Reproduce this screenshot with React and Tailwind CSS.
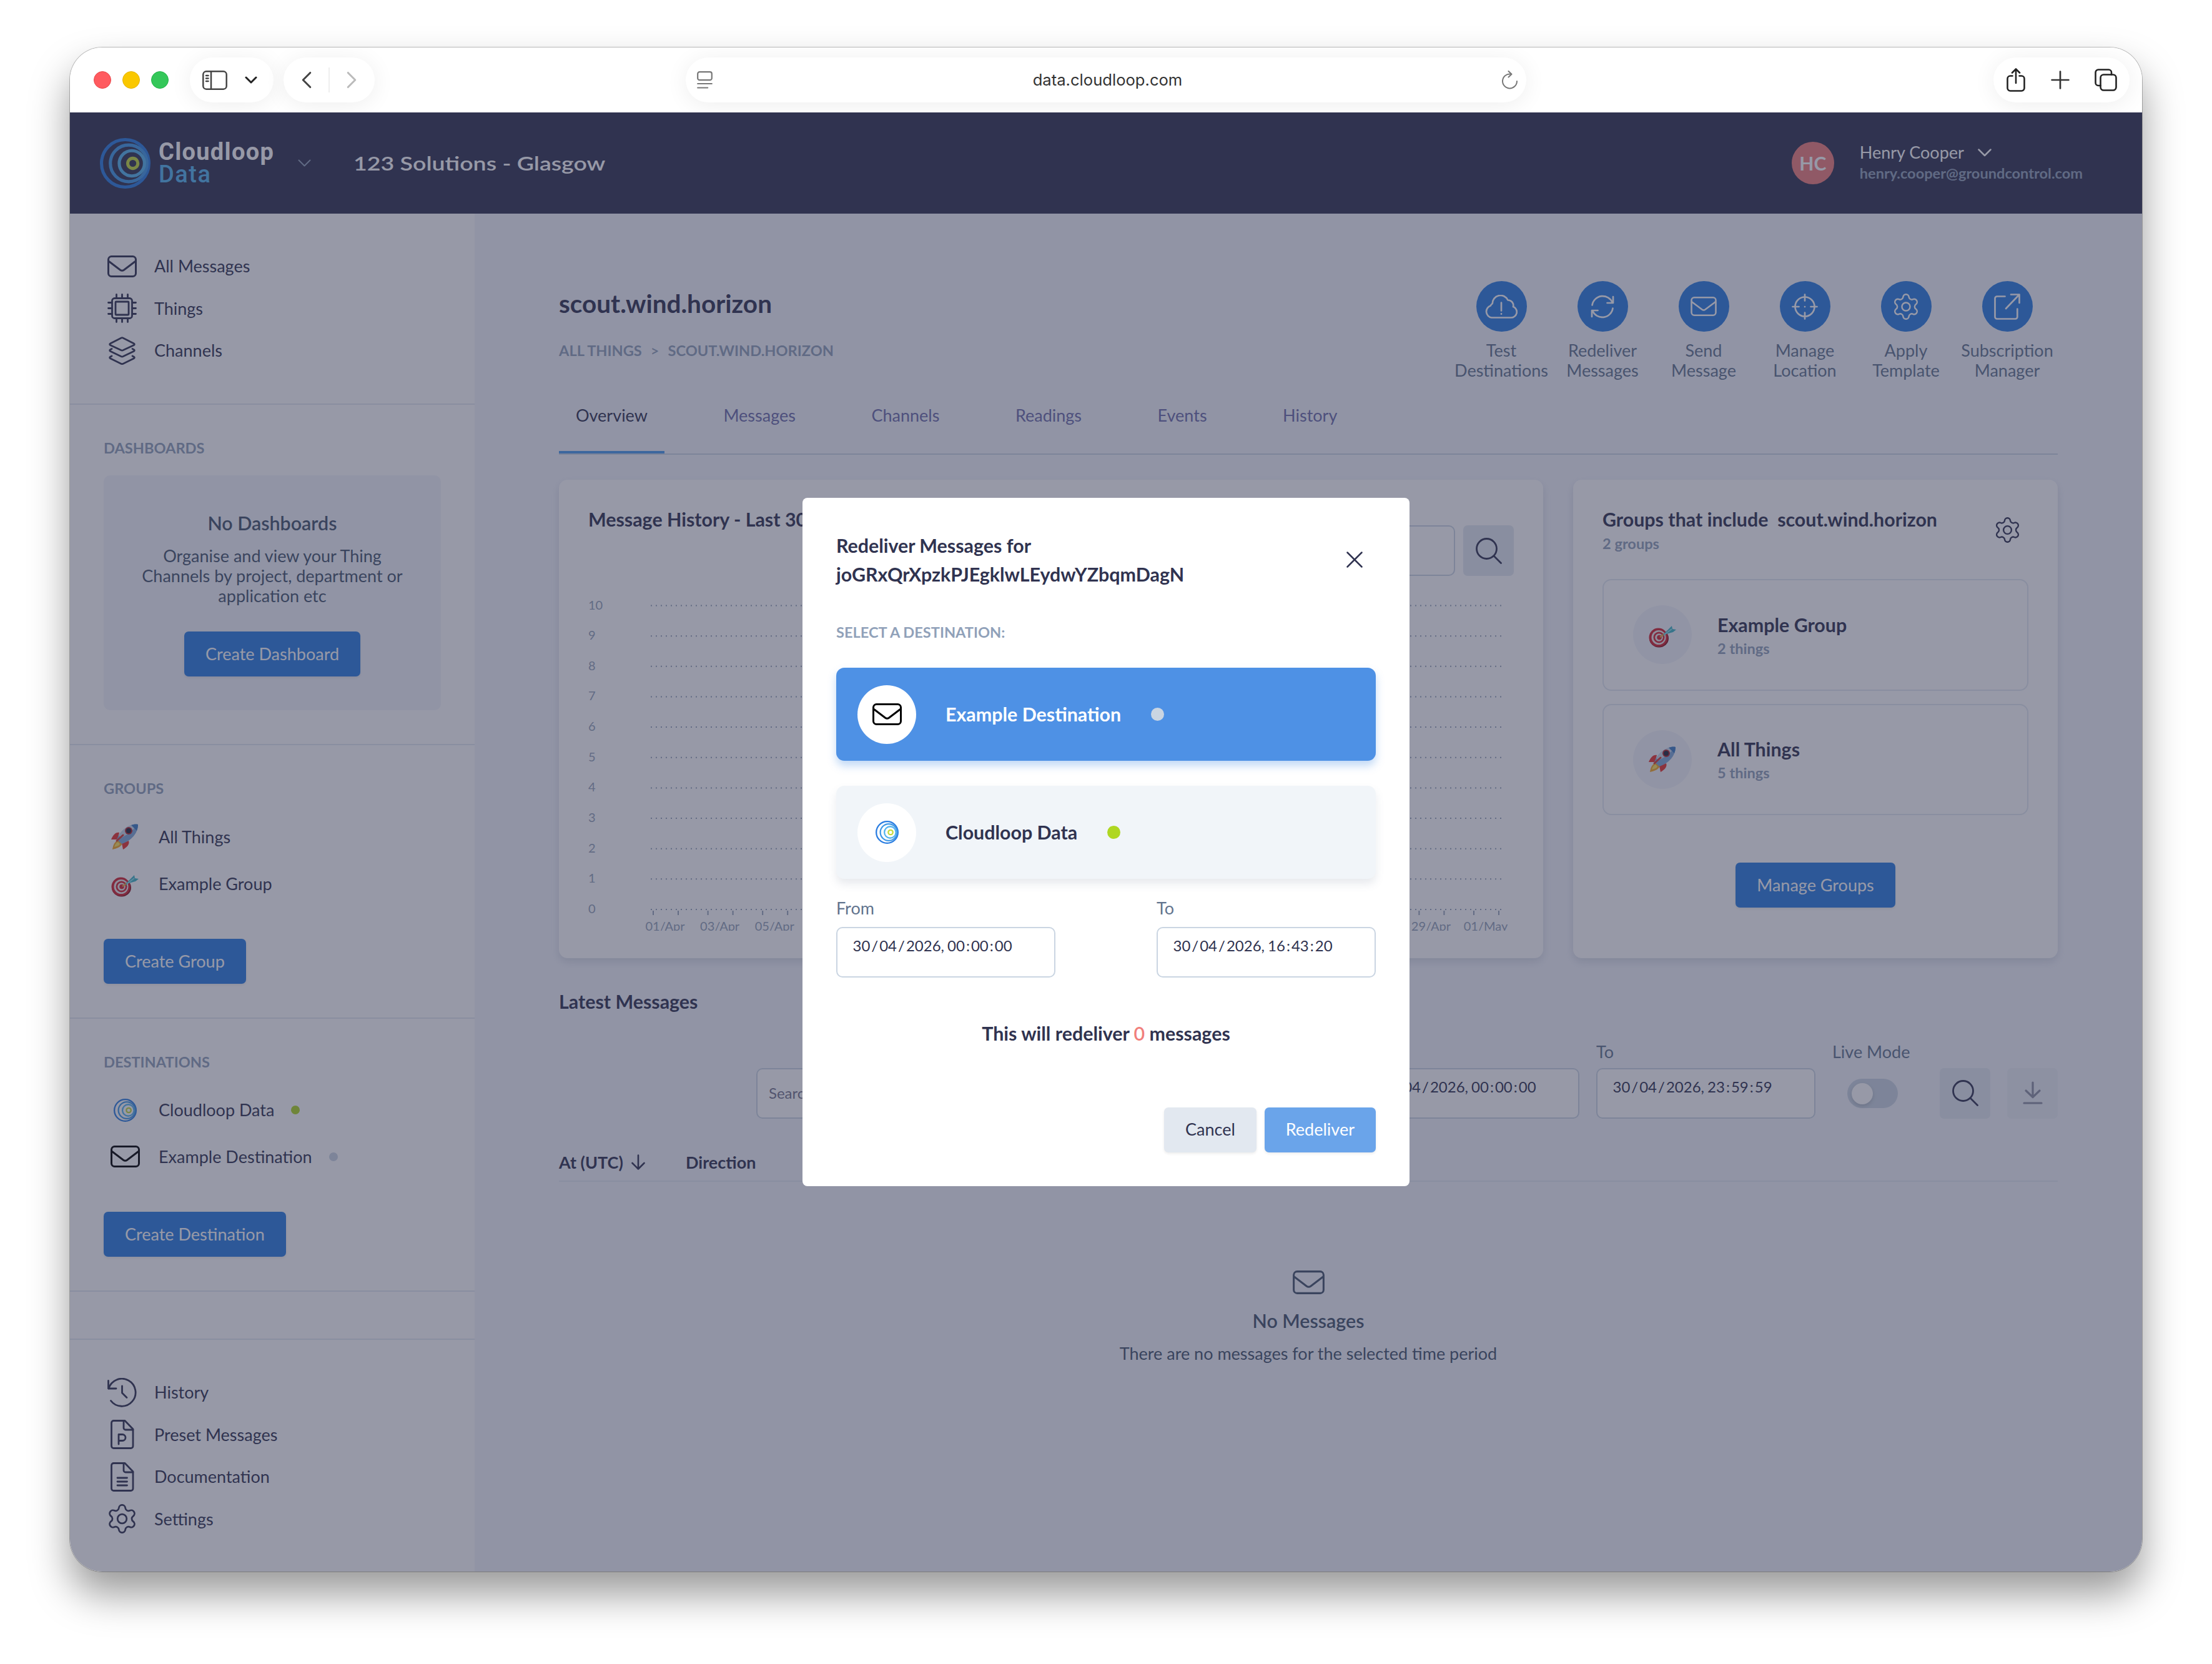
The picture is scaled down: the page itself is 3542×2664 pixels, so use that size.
import React from 'react';
import { ChevronLeft, ChevronRight, Plus, X } from 'lucide-react';

const Icon = ({ w, h, box, stroke = 1.5, className = '', children }) => (
  <svg
    width={w}
    height={h}
    viewBox={box}
    fill="none"
    stroke="currentColor"
    strokeWidth={stroke}
    strokeLinecap="round"
    strokeLinejoin="round"
    className={`shrink-0 ${className}`}
  >
    {children}
  </svg>
);

const Envelope = ({ w = 47, h = 35, stroke = 3, className }) => (
  <Icon w={w} h={h} box="0 0 47 35" stroke={stroke} className={className}>
    <rect x="1.5" y="1.5" width="44" height="32" rx="5" />
    <path d="M2.5 9.5 20.6 23.2a5 5 0 0 0 5.8 0L44.5 9.5" />
  </Icon>
);

const Chip = () => (
  <Icon w={47} h={47} box="0 0 47 47" stroke={2.8}>
    <rect x="7.5" y="7.5" width="32" height="32" rx="4" />
    <rect x="13" y="13" width="21" height="21" rx="1" />
    <path d="M14.5 7V1.5M23.5 7V1.5M32.5 7V1.5M14.5 45.5V40M23.5 45.5V40M32.5 45.5V40M7 14.5H1.5M7 23.5H1.5M7 32.5H1.5M45.5 14.5H40M45.5 23.5H40M45.5 32.5H40" />
  </Icon>
);

const Layers = () => (
  <Icon w={47} h={47} box="0 0 47 47" stroke={2.8}>
    <path d="M22.2 3 4.5 12a1.3 1.3 0 0 0 0 2.4l17.7 8.4a3 3 0 0 0 2.6 0l17.7-8.4a1.3 1.3 0 0 0 0-2.4L24.8 3a3 3 0 0 0-2.6 0z" />
    <path d="m7 20.5-2.5 1.3a1.3 1.3 0 0 0 0 2.4l17.7 8.6a3 3 0 0 0 2.6 0l17.7-8.6a1.3 1.3 0 0 0 0-2.4L40 20.5" />
    <path d="m7 32-2.5 1.3a1.3 1.3 0 0 0 0 2.4L22.2 44.4a3 3 0 0 0 2.6 0l17.7-8.7a1.3 1.3 0 0 0 0-2.4L40 32" />
  </Icon>
);

const Clock = () => (
  <Icon w={47} h={47} box="0 0 47 47" stroke={2.8}>
    <path d="M1.5 4.5V17H14" />
    <path d="M2 17A22 22 0 1 1 5.5 36.5" />
    <path d="M23.5 13v11l7.5 7.5" />
  </Icon>
);

const FileIcon = ({ children }) => (
  <Icon w={47} h={47} box="0 0 47 47" stroke={2.8}>
    <path d="M10 1.5h18L41 15v27a3.5 3.5 0 0 1-3.5 3.5h-27.5A3.5 3.5 0 0 1 6.5 42V5A3.5 3.5 0 0 1 10 1.5z" />
    <path d="M26 1.5V13a3 3 0 0 0 3 3h12" />
    {children}
  </Icon>
);

const Gear = ({ size = 47, stroke = 1.25, className }) => (
  <Icon w={size} h={size} box="1.4 1.4 21.2 21.2" stroke={stroke} className={className}>
    <path d="M9.671 4.136a2.34 2.34 0 0 1 4.659 0 2.34 2.34 0 0 0 3.319 1.915 2.34 2.34 0 0 1 2.33 4.033 2.34 2.34 0 0 0 0 3.831 2.34 2.34 0 0 1-2.33 4.033 2.34 2.34 0 0 0-3.319 1.915 2.34 2.34 0 0 1-4.659 0 2.34 2.34 0 0 0-3.32-1.915 2.34 2.34 0 0 1-2.33-4.033 2.34 2.34 0 0 0 0-3.831A2.34 2.34 0 0 1 6.35 6.051a2.34 2.34 0 0 0 3.319-1.915" />
    <circle cx="12" cy="12" r="3.3" />
  </Icon>
);

const SearchIcon = () => (
  <Icon w={42} h={42} box="0 0 42 42" stroke={2.8}>
    <circle cx="17.5" cy="17.5" r="16" />
    <path d="m29 29 11.5 11.5" />
  </Icon>
);

const CloudAlert = () => (
  <Icon w={52} h={38} box="0 0 52 38" stroke={2.7}>
    <path d="M10.5 36.5h31a9 9 0 0 0 3.5-17.4 8.5 8.5 0 0 0-8.5-10.6 13 13 0 0 0-24.8 5.5 9.5 9.5 0 0 0-3 3.5A9.8 9.8 0 0 0 10.5 36.5z" />
    <path d="M26 12.5v13M26 30.3v.4" />
  </Icon>
);

const Refresh = () => (
  <Icon w={38} h={38} box="0 0 38 38" stroke={2.7}>
    <path d="M36 3v10H26.5M2 35V25h9.5" />
    <path d="M2.5 16.5A17 17 0 0 1 35 12.5M35.5 21.5A17 17 0 0 1 3 25.5" />
  </Icon>
);

const Crosshair = () => (
  <Icon w={42} h={42} box="0 0 42 42" stroke={2.7}>
    <circle cx="21" cy="21" r="15.5" />
    <path d="M21 1.5v10M21 30.5v10M1.5 21h10M30.5 21h10M21 21v.1" />
  </Icon>
);

const OpenLink = () => (
  <Icon w={42} h={42} box="0 0 42 42" stroke={2.7}>
    <path d="M17.5 4.5H5A3.3 3.3 0 0 0 1.5 8v29A3.3 3.3 0 0 0 5 40.5h29a3.3 3.3 0 0 0 3.3-3.5V24.5" />
    <path d="M27 1.5h13.5V15M40 2 19 24" />
  </Icon>
);

const Rocket = () => (
  <svg width="44" height="42" viewBox="0 0 44 42" className="shrink-0">
    <path d="M2 41c1-7 3-12 9-15l7 5c-2 6-8 8-16 10z" fill="#f6a823" />
    <path d="M5 37c1-4 3-7 6-8l3 3c-1 3-5 4-9 5z" fill="#ffe45c" />
    <path d="M13 14C7 13 3 18 0 25l10 0z" fill="#e8332c" />
    <path d="M28 27c2 5-2 10-9 14l-2-10z" fill="#e8332c" />
    <path d="M43 1C31-1 15 9 9 25l8 7C32 27 43 15 43 1z" fill="#7ea9d8" />
    <path d="M43 1C31-1 19 7 12 19l4 3C26 18 36 9 43 1z" fill="#c9d8e8" />
    <path d="M43 1c-4-1-8 0-11 1l9 9c1-3 2-6 2-10z" fill="#3d7cc4" />
    <circle cx="28" cy="11" r="6" fill="#b3262b" />
    <circle cx="28" cy="11" r="4" fill="#20263d" />
    <path d="m9 27 10-9" stroke="#d63a32" strokeWidth="3" strokeLinecap="round" />
  </svg>
);

const Dart = () => (
  <svg width="44" height="36" viewBox="0 0 44 36" className="mt-1.5 shrink-0">
    <ellipse cx="16.5" cy="21" rx="15.5" ry="14.5" fill="#8c101b" />
    <circle cx="15.5" cy="19.5" r="15" fill="#d3222f" />
    <circle cx="16" cy="19.5" r="11.5" fill="#ece6e6" />
    <circle cx="16.5" cy="19.5" r="9" fill="#d3222f" />
    <circle cx="16.5" cy="19.5" r="6.3" fill="#ece6e6" />
    <circle cx="17" cy="19.5" r="3.8" fill="#d3222f" />
    <path d="m18 19 7-5" stroke="#f0a53a" strokeWidth="2.5" />
    <path d="M24 14 34 4l3-3 1 5 6 1-5 4-11 3-5 3z" fill="#3fb4c4" />
    <path d="m25 15 12-9" stroke="#8be0ea" strokeWidth="2" />
  </svg>
);

const Rings = ({ size = 37, stroke = 5 }) => (
  <svg width={size} height={size} viewBox="0 0 80 80" fill="none" strokeWidth={stroke} className="shrink-0">
    <circle cx="40" cy="40" r="37.5" stroke="#2a7de1" />
    <circle cx="45.5" cy="40" r="29" stroke="#4199e6" />
    <circle cx="50.5" cy="40" r="20" stroke="#54b4ee" />
    <circle cx="52" cy="40" r="8" stroke="#c4da3c" />
  </svg>
);

const Button = ({ children, className = 'bg-[#2a7de1] text-white' }) => (
  <button className={`flex h-[72px] items-center rounded-[7px] px-[34px] shadow-[0_2px_4px_rgba(0,0,0,0.08)] ${className}`}>
    {children}
  </button>
);

const Dot = ({ className }) => <span className={`shrink-0 rounded-full ${className}`}></span>;

/* ---------- browser toolbar ---------- */

const pill = 'flex h-[72px] items-center rounded-full bg-white shadow-[0_4px_36px_rgba(0,0,0,0.07)]';

const Toolbar = () => (
  <div className="flex h-[104px] items-center bg-white pl-[38px] pr-5 text-[#222]">
    <div className="flex gap-[18px]">
      <Dot className="size-7 border border-[#e8474b] bg-[#ff5a5f]" />
      <Dot className="size-7 border border-[#e5b400] bg-[#fac800]" />
      <Dot className="size-7 border border-[#25b34a] bg-[#34c759]" />
    </div>
    <div className={`${pill} ml-[34px] w-[134px] pl-5`}>
      <Icon w={40} h={31} box="0 0 40 31" stroke={2.5} className="text-[#444]">
        <rect x="1.3" y="1.3" width="37.4" height="28.4" rx="5" />
        <path d="M14 1.5v28M6 8h3.5M6 12.5h3.5M6 17h3.5" />
      </Icon>
      <Icon w={20} h={12} box="0 0 20 12" stroke={3} className="ml-7">
        <path d="m2 2 8 8 8-8" />
      </Icon>
    </div>
    <div className={`${pill} ml-4 w-[146px] justify-between px-[14px]`}>
      <ChevronLeft size={46} strokeWidth={1.6} className="text-[#444]" />
      <span className="h-10 w-0.5 bg-[#eee]"></span>
      <ChevronRight size={46} strokeWidth={1.6} className="text-[#bbb]" />
    </div>
    <div className={`${pill} ml-[498px] w-[1346px] justify-between pl-[18px] pr-[13px] text-[#777]`}>
      <Icon w={25} h={28} box="0 0 25 28" stroke={2.2}>
        <rect x="1.2" y="1.2" width="22.6" height="13" rx="3" />
        <path d="M1.2 20h22.6M1.2 26.5h16" />
      </Icon>
      <span className="ml-0.5 font-[Inter] text-[25.6px] text-[#333]">data.cloudloop.com</span>
      <Icon w={27} h={30} box="0 0 27 30" stroke={2}>
        <path d="M15 5.5A11.5 11.5 0 1 0 25 17" />
        <path d="m11.5 1 5 4.7-5 4.8" />
      </Icon>
    </div>
    <div className={`${pill} ml-auto w-[218px] justify-between pl-[21px] pr-5`}>
      <Icon w={30} h={38} box="0 0 30 38" stroke={2.6}>
        <path d="M9.5 12.5H6A4.5 4.5 0 0 0 1.5 17v15A4.5 4.5 0 0 0 6 36.5h18a4.5 4.5 0 0 0 4.5-4.5V17a4.5 4.5 0 0 0-4.5-4.5h-3.5M15 24V2M9 7.5l6-6 6 6" />
      </Icon>
      <Plus size={46} strokeWidth={1.4} className="text-[#333]" />
      <Icon w={36} h={36} box="0 0 36 36" stroke={2.6}>
        <rect x="9.5" y="9.5" width="25" height="25" rx="5" />
        <path d="M9.5 27H6a4.5 4.5 0 0 1-4.5-4.5V6A4.5 4.5 0 0 1 6 1.5h16.5A4.5 4.5 0 0 1 27 6v3.5" />
      </Icon>
    </div>
  </div>
);

/* ---------- app header ---------- */

const Header = () => (
  <header className="flex h-[162px] items-center bg-[#303350] pl-12 pr-[95px] text-white">
    <Rings size={81} stroke={5} />
    <div className="ml-[13px] w-[187px] font-[Roboto] text-[38px] leading-[36px]">
      <div className="font-bold tracking-[1.3px]">Cloudloop</div>
      <div className="font-medium tracking-[1.5px] text-[#54b4ee]">Data</div>
    </div>
    <Icon w={21} h={13} box="0 0 21 13" stroke={2} className="ml-9 text-slate-400">
      <path d="m1.5 1.5 9 9 9-9" />
    </Icon>
    <div className="ml-[68px] origin-left scale-x-[1.21] text-[31px] font-semibold">123 Solutions - Glasgow</div>
    <div className="ml-auto flex items-center">
      <div className="flex size-[68px] items-center justify-center rounded-full bg-[#f17f7c] text-[30px] font-bold">HC</div>
      <div className="ml-[41px]">
        <div className="flex items-center text-[27px] leading-[34px]">
          Henry Cooper
          <Icon w={22} h={13} box="0 0 22 13" stroke={2.5} className="ml-[22px]">
            <path d="m1.5 1.5 9.5 9.5 9.5-9.5" />
          </Icon>
        </div>
        <div className="pb-0.5 text-[23.6px] font-bold leading-8 text-slate-400">henry.cooper@groundcontrol.com</div>
      </div>
    </div>
  </header>
);

/* ---------- sidebar ---------- */

const NavItem = ({ icon, label }) => (
  <a className="flex h-[67.5px] items-center gap-7 pl-[60px]">
    {icon}
    {label}
  </a>
);

const ListItem = ({ icon, label, dot }) => (
  <a className="flex h-[74.5px] items-center">
    <span className="mr-5 flex w-[68px] justify-center">{icon}</span>
    {label}
    {dot && <Dot className={`ml-[27px] size-[14px] ${dot}`} />}
  </a>
);

const SectionTitle = ({ children }) => (
  <h3 className="text-[23.6px] font-bold leading-8 text-slate-400">{children}</h3>
);

const Sidebar = () => (
  <aside className="w-[648px] shrink-0 bg-white">
    <nav className="h-[306px] border-b-2 border-slate-200 pt-[50.5px]">
      <NavItem icon={<Envelope />} label="All Messages" />
      <NavItem icon={<Chip />} label="Things" />
      <NavItem icon={<Layers />} label="Channels" />
    </nav>

    <section className="h-[545px] border-b-2 border-slate-200 px-[54px] pt-[53px]">
      <SectionTitle>DASHBOARDS</SectionTitle>
      <div className="mt-[28px] flex h-[376px] flex-col items-center rounded-[10px] bg-[#f3f5fb] pt-14 text-center text-slate-600">
        <div className="text-[30.4px] font-semibold leading-10">No Dashboards</div>
        <p className="mt-[17px] w-[440px] leading-8">Organise and view your Thing Channels by project, department or application etc</p>
        <Button className="mt-[41px] bg-[#2a7de1] text-white">Create Dashboard</Button>
      </div>
    </section>

    <section className="h-[438px] border-b-2 border-slate-200 px-[54px] pt-[53px]">
      <SectionTitle>GROUPS</SectionTitle>
      <div className="mb-[51px] mt-[25px]">
        <ListItem icon={<Rocket />} label="All Things" />
        <ListItem icon={<Dart />} label="Example Group" />
      </div>
      <Button>Create Group</Button>
    </section>

    <section className="h-[437px] border-b-2 border-slate-200 px-[54px] pt-[53px]">
      <SectionTitle>DESTINATIONS</SectionTitle>
      <div className="mb-[51px] mt-[24px]">
        <ListItem icon={<Rings />} label="Cloudloop Data" dot="bg-[#afd722]" />
        <ListItem icon={<Envelope className="text-black" />} label="Example Destination" dot="bg-slate-300" />
      </div>
      <Button>Create Destination</Button>
    </section>

    <div className="h-[77px] border-b-2 border-slate-200"></div>

    <nav className="pt-[50.5px]">
      <NavItem icon={<Clock />} label="History" />
      <NavItem
        icon={
          <FileIcon>
            <path d="M18 39V23.5h6a5 5 0 0 1 0 10h-6" />
          </FileIcon>
        }
        label="Preset Messages"
      />
      <NavItem
        icon={
          <FileIcon>
            <path d="M16 25h15.5M16 31h15.5M16 37h15.5" />
          </FileIcon>
        }
        label="Documentation"
      />
      <NavItem icon={<Gear />} label="Settings" />
    </nav>
  </aside>
);

/* ---------- main ---------- */

const actions = [
  { icon: <CloudAlert />, label: ['Test', 'Destinations'] },
  { icon: <Refresh />, label: ['Redeliver', 'Messages'] },
  { icon: <Envelope w={42} h={31} stroke={2.9} />, label: ['Send', 'Message'] },
  { icon: <Crosshair />, label: ['Manage', 'Location'] },
  { icon: <Gear size={42} />, label: ['Apply', 'Template'] },
  { icon: <OpenLink />, label: ['Subscription', 'Manager'] },
];

const PageHeader = () => (
  <div className="flex justify-between">
    <div className="pt-[9px]">
      <h1 className="text-[40.5px] font-bold leading-[54px]">scout.wind.horizon</h1>
      <div className="mt-8 flex text-[23.6px] font-bold leading-8 text-slate-400">
        <span>ALL THINGS</span>
        <span className="mx-[14px] font-semibold">&gt;</span>
        <span>SCOUT.WIND.HORIZON</span>
      </div>
    </div>
    <div className="flex">
      {actions.map((action) => (
        <div key={action.label[1]} className="flex w-[162px] flex-col items-center text-center leading-8 text-slate-500">
          <span className="mb-[14px] flex size-[81px] items-center justify-center rounded-full bg-[#2a7de1] text-white">
            {action.icon}
          </span>
          <span>{action.label[0]}</span>
          <span>{action.label[1]}</span>
        </div>
      ))}
    </div>
  </div>
);

const tabs = ['Overview', 'Messages', 'Channels', 'Readings', 'Events', 'History'];

const Tabs = () => (
  <div className="mt-9 flex gap-[67.5px] border-b-2 border-slate-300 leading-10 text-[#6c6daa]">
    {tabs.map((tab, i) => (
      <div
        key={tab}
        className={`border-b-4 px-[27px] pb-[37px] ${i === 0 ? 'border-[#4a9bec] text-[#303350]' : 'border-transparent'}`}
      >
        {tab}
      </div>
    ))}
  </div>
);

const ticks = Array.from({ length: 16 }, (_, i) => {
  const day = 1 + i * 2;
  return day > 30 ? '01/May' : `${String(day).padStart(2, '0')}/Apr`;
});

const Chart = () => (
  <svg width="1481" height="568" viewBox="0 0 1481 568" className="overflow-hidden font-[Lato] text-[20px]">
    {Array.from({ length: 11 }, (_, i) => (
      <g key={i}>
        <text x="0" y={53.5 + i * 48.65} fill="#94a3b8">{10 - i}</text>
        <path d={`M100 ${47.5 + i * 48.65}H1462`} stroke="#94a3b8" strokeWidth="2" strokeDasharray="2 6" />
      </g>
    ))}
    {ticks.map((label, i) => (
      <g key={label}>
        <path d={`M${104 + i * 87.6} 536v7M${144 + i * 87.6} 536v7`} stroke="#94a3b8" strokeWidth="2" />
        <text x={123 + i * 87.6} y="568" textAnchor="middle" fill="#94a3b8">{label}</text>
      </g>
    ))}
  </svg>
);

const SquareButton = ({ children, className = 'bg-slate-200' }) => (
  <button className={`flex size-[81px] items-center justify-center rounded-[7px] ${className}`}>{children}</button>
);

const card = 'rounded-[14px] bg-white shadow-[0_6px_14px_rgba(100,116,139,0.2)]';

const HistoryCard = () => (
  <div className={`${card} h-[766px] w-[1576px] px-[47px] pt-[43px]`}>
    <div className="flex items-start justify-between">
      <h2 className="text-[30.4px] font-bold leading-10">Message History - Last 30 Days</h2>
      <div className="mt-[30px] flex gap-[13px]">
        <div className="h-[81px] w-[540px] rounded-[10px] border-2 border-slate-300"></div>
        <SquareButton><SearchIcon /></SquareButton>
      </div>
    </div>
    <Chart />
  </div>
);

const GroupRow = ({ icon, name, count }) => (
  <div className="flex h-[178.5px] items-center rounded-[14px] border-2 border-slate-200 pl-[47px]">
    <span className="flex size-[94px] items-center justify-center rounded-full bg-[#f3f5fb]">{icon}</span>
    <div className="ml-[41px] pt-[3px]">
      <div className="text-[30.4px] font-bold leading-10">{name}</div>
      <div className="text-[23.6px] font-bold leading-[36px] text-slate-400">{count}</div>
    </div>
  </div>
);

const GroupsCard = () => (
  <div className={`${card} flex h-[766px] w-[776px] flex-col px-[47px] pt-[43px]`}>
    <div className="flex justify-between pr-[13px]">
      <div>
        <h2 className="text-[30.4px] font-bold leading-10">
          Groups that include &nbsp;scout.wind.horizon
        </h2>
        <div className="text-[23.6px] font-bold leading-[38px] text-slate-400">2 groups</div>
      </div>
      <Gear size={41} className="mt-[17px]" />
    </div>
    <div className="mt-[38px] flex flex-col gap-[21px]">
      <GroupRow icon={<Dart />} name="Example Group" count="2 things" />
      <GroupRow icon={<Rocket />} name="All Things" count="5 things" />
    </div>
    <div className="mt-[76px] flex justify-center">
      <Button>Manage Groups</Button>
    </div>
  </div>
);

const DateField = ({ label, date, time, labelClass = 'mb-[8.5px]' }) => (
  <div>
    <div className={`leading-[34px] text-slate-500 ${labelClass}`}>{label}</div>
    <div className="flex h-[81px] w-[351px] items-start rounded-[10px] border-2 border-slate-300 bg-white pl-[24.5px] pt-3 leading-8">
      <span className="flex text-[24px]">
        {date.split('/').map((part, i) => (
          <React.Fragment key={i}>
            {i > 0 && <span className="mx-[2px]">/</span>}
            <span>{part}</span>
          </React.Fragment>
        ))}
        <span className="mr-[5px]">,</span>
        {time.split(':').map((part, i) => (
          <React.Fragment key={i}>
            {i > 0 && <span className="mx-[2px]">:</span>}
            <span>{part}</span>
          </React.Fragment>
        ))}
      </span>
    </div>
  </div>
);

const LatestMessages = () => (
  <section className="mt-[49px]">
    <h2 className="text-[30.4px] font-bold leading-10">Latest Messages</h2>
    <div className="mt-11 flex items-end justify-end gap-[27px]">
      <div className="flex h-[81px] w-[940px] items-center rounded-[10px] border-2 border-slate-300 bg-white pl-[18px] text-[24px] text-[#75758c]">
        Search
      </div>
      <DateField label="From" date="30/04/2026" time="00:00:00" />
      <DateField label="To" date="30/04/2026" time="23:59:59" />
      <div className="flex w-[145px] flex-col items-start self-stretch">
        <div className="mb-[26px] leading-[34px] text-slate-500">Live Mode</div>
        <div className="ml-6 flex h-[47px] w-[81px] items-center rounded-full bg-slate-300 pl-[7px]">
          <span className="size-[34px] rounded-full bg-white shadow-[0_3px_6px_rgba(0,0,0,0.15)]"></span>
        </div>
      </div>
      <SquareButton><SearchIcon /></SquareButton>
      <SquareButton className="bg-slate-200/50 text-[#303350]/50">
        <Icon w={32} h={38} box="0 0 32 38" stroke={3.2}>
          <path d="M16 2v23M5 15l11 10.5L27 15M2 35h28" />
        </Icon>
      </SquareButton>
    </div>

    <div className="mt-[50px] flex border-b-2 border-slate-200 pb-[9px] font-bold leading-10">
      <div className="flex w-[203px] items-center">
        At (UTC)
        <Icon w={22} h={25} box="0 0 22 25" stroke={2.6} className="ml-[13px]">
          <path d="M11 1.5v22M1.5 14l9.5 9.5 9.5-9.5" />
        </Icon>
      </div>
      <div>Direction</div>
    </div>

    <div className="flex flex-col items-center pt-[142px] text-slate-600">
      <Envelope w={51} h={38} stroke={2.8} />
      <div className="mt-[22px] text-[30.4px] font-semibold leading-10">No Messages</div>
      <div className="mt-[13px] leading-10">There are no messages for the selected time period</div>
    </div>
  </section>
);

/* ---------- dialog ---------- */

const Destination = ({ icon, name, dot, selected }) => (
  <div
    className={`flex h-[149px] items-center rounded-[13px] pl-[34px] text-[30.4px] font-bold ${
      selected
        ? 'bg-[#4e91e5] text-white shadow-[0_8px_14px_rgba(78,145,229,0.35)]'
        : 'bg-slate-100 shadow-[0_8px_14px_rgba(100,116,139,0.15)]'
    }`}
  >
    <span className="mr-[47px] flex size-[94px] items-center justify-center rounded-full bg-white text-black">{icon}</span>
    {name}
    <Dot className={`ml-12 size-[21px] ${dot}`} />
  </div>
);

const RedeliverDialog = () => (
  <div className="h-[1102px] w-[972px] rounded-[8px] bg-white px-[54px] pt-[53px]">
    <div className="flex items-center justify-between pr-[11px]">
      <h2 className="text-[30.4px] font-bold leading-[46px]">
        Redeliver Messages for
        <br />
        joGRxQrXpzkPJEgklwLEydwYZbqmDagN
      </h2>
      <X size={46} strokeWidth={1.3} />
    </div>
    <div className="mt-[54px] text-[23.6px] font-bold leading-8 text-slate-400">SELECT A DESTINATION:</div>
    <div className="mt-[41px] flex flex-col gap-10">
      <Destination icon={<Envelope />} name="Example Destination" dot="bg-slate-300" selected />
      <Destination icon={<Rings />} name="Cloudloop Data" dot="bg-[#afd722]" />
    </div>
    <div className="mt-[30px] flex justify-between">
      <DateField label="From" date="30/04/2026" time="00:00:00" labelClass="mb-[12.5px]" />
      <DateField label="To" date="30/04/2026" time="16:43:20" labelClass="mb-[12.5px]" />
    </div>
    <p className="mt-[69px] text-center text-[30.4px] font-bold leading-10">
      This will redeliver <span className="font-semibold text-[#f17f7c]">0</span> messages
    </p>
    <div className="mt-[99px] flex justify-end gap-[13px]">
      <Button className="bg-slate-200">Cancel</Button>
      <Button className="bg-[#6aa4ea] text-white">Redeliver</Button>
    </div>
  </div>
);

export default function App() {
  return (
    <div className="flex h-[2664px] w-[3542px] items-start bg-white pl-28 pt-[76px] font-[Lato,sans-serif] text-[27px] text-[#303350]">
      <div className="h-[2440px] w-[3318px] overflow-hidden rounded-[52px] shadow-[0_0_0_1px_rgba(0,0,0,0.25),0_36px_64px_rgba(0,0,0,0.4)]">
        <Toolbar />
        <div className="relative h-[2336px]">
          <Header />
          <div className="flex h-[2174px]">
            <Sidebar />
            <main className="flex-1 bg-[#f3f5fb] px-[135px] pt-[108px]">
              <PageHeader />
              <Tabs />
              <div className="mt-10 flex justify-between">
                <HistoryCard />
                <GroupsCard />
              </div>
              <LatestMessages />
            </main>
          </div>
          <div className="absolute inset-0 flex items-center justify-center bg-[#303350]/50">
            <RedeliverDialog />
          </div>
        </div>
      </div>
    </div>
  );
}
